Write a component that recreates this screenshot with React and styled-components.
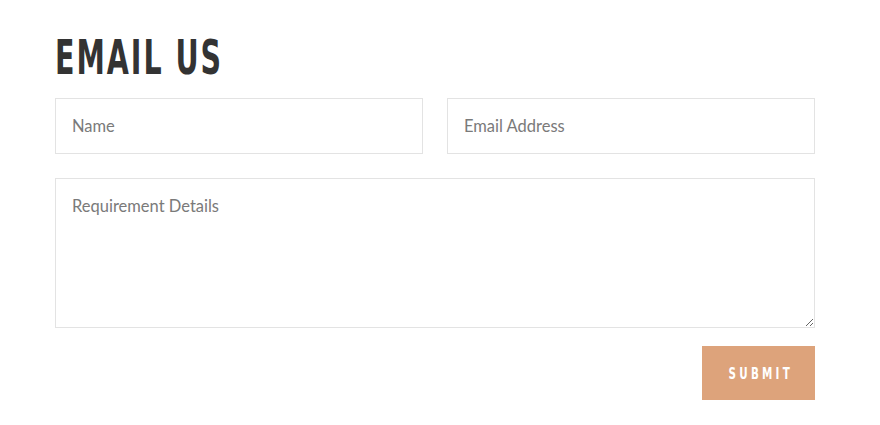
import styled, { createGlobalStyle } from "styled-components";

const GlobalStyle = createGlobalStyle`
  body {
    margin: 0;
    background: #fff;
  }
  * {
    box-sizing: border-box;
  }
`

// no Oswald offline: condensed DejaVu squeezed down to match
const condensed = `"DejaVu Sans Condensed", "DejaVu Sans", "Liberation Sans", sans-serif`;

export default function App() {
    return (
        <>
            <GlobalStyle />
            <Section>
                <Title><Narrow>EMAIL US</Narrow></Title>
                <Form onSubmit={(e) => e.preventDefault()}>
                    <Row>
                        <Field type="text" placeholder="Name" />
                        <Field type="email" placeholder="Email Address" />
                    </Row>
                    <Details placeholder="Requirement Details" />
                    <Actions>
                        <SubmitButton type="submit">
                            <ButtonLabel>Submit</ButtonLabel>
                        </SubmitButton>
                    </Actions>
                </Form>
            </Section>
        </>
    )
}

const Section = styled.div`
  width: 760px;
  margin: 0 0 0 55px;
  padding-top: 30px;
`

const Title = styled.h2`
  margin: 0 0 14px;
  font-family: ${condensed};
  font-weight: 700;
  font-size: 48px;
  line-height: 54px;
  letter-spacing: 3px;
  color: #333;
  white-space: nowrap;
`

const Narrow = styled.span`
  display: inline-block;
  transform: scaleX(0.66);
  transform-origin: left center;
`

const Form = styled.form`
  display: flex;
  flex-direction: column;
  gap: 24px;
`

const Row = styled.div`
  display: grid;
  grid-template-columns: 1fr 1fr;
  gap: 24px;
`

const inputStyle = `
  width: 100%;
  border: 1px solid #e3e3e3;
  background: #fff;
  padding: 0 16px;
  font-family: Lato, "Open Sans", sans-serif;
  font-size: 16.5px;
  color: #555;
  outline: none;
  &::placeholder {
    color: #7a7a7a;
  }
`

const Field = styled.input`
  ${inputStyle}
  height: 56px;
`

const Details = styled.textarea`
  ${inputStyle}
  height: 150px;
  padding-top: 16px;
  resize: vertical;
  line-height: 22px;
  display: block;
`

const Actions = styled.div`
  display: flex;
  justify-content: flex-end;
  margin-top: -6px;
`

const SubmitButton = styled.button`
  width: 113px;
  height: 54px;
  border: none;
  background: #dda37b;
  color: #fff;
  font-family: ${condensed};
  font-weight: 700;
  font-size: 16px;
  letter-spacing: 4.5px;
  text-transform: uppercase;
  padding: 0 0 0 4px;
  cursor: pointer;
  white-space: nowrap;
  overflow: hidden;
`

const ButtonLabel = styled.span`
  display: inline-block;
  transform: scaleX(0.72);
`
